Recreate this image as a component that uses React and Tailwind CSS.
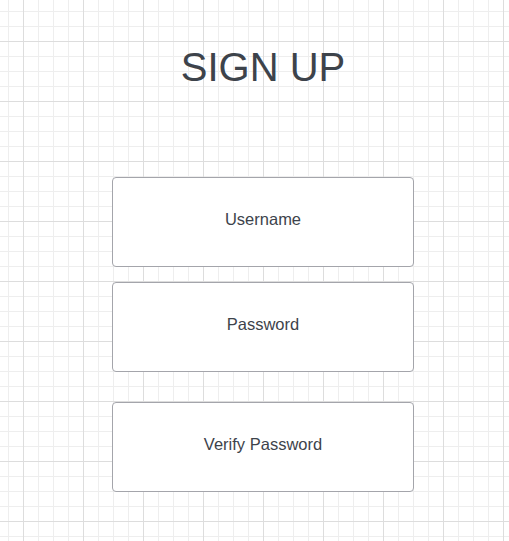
export default function App() {
  const font = { fontFamily: '"Liberation Sans", Arial, sans-serif' };
  return (
    <div
      className="w-[509px] h-[541px] overflow-hidden bg-white [background-image:linear-gradient(to_right,#dddddd_1px,transparent_1px),linear-gradient(to_bottom,#dddddd_1px,transparent_1px),linear-gradient(to_right,#eeeeee_1px,transparent_1px),linear-gradient(to_bottom,#eeeeee_1px,transparent_1px)] [background-size:60px_60px,60px_60px,15px_15px,15px_15px] [background-position:23px_0,0_41px,8px_0,0_11px]"
      style={font}
    >
      <div className="ml-[112px] w-[302px] flex flex-col">
        <h1 className="mt-[47px] text-center text-[40px] leading-[40px] text-[#3d434b] font-normal">
          SIGN UP
        </h1>
        <div className="mt-[90px] flex flex-col">
          <Box label="Username" />
          <div className="h-[15px]" />
          <Box label="Password" />
          <div className="h-[30px]" />
          <Box label="Verify Password" />
        </div>
      </div>
    </div>
  );
}

function Box({ label }) {
  return (
    <div className="h-[90px] w-[302px] bg-white border border-[#a4a5ab] rounded-[4px] flex items-center justify-center pb-[5px]">
      <span className="text-[16.5px] text-[#3d434b]">{label}</span>
    </div>
  );
}
